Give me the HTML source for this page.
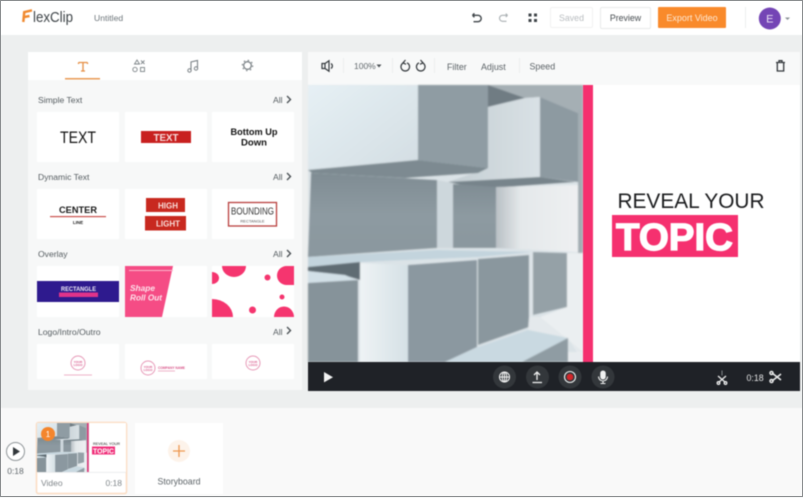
<!DOCTYPE html>
<html><head><meta charset="utf-8"><style>
html,body{margin:0;padding:0;width:803px;height:498px;overflow:hidden;background:#edefef}
svg{position:absolute;left:0;top:0;display:block;filter:blur(.45px)}
text{font-family:"Liberation Sans",sans-serif}
#edge{position:absolute;left:0;top:0;width:801px;height:495px;border:1px solid #8a8d8f}
</style></head><body>
<svg width="803" height="498" viewBox="0 0 803 498" xmlns="http://www.w3.org/2000/svg">
<defs>
<filter id="soft" x="-2%" y="-2%" width="104%" height="104%"><feGaussianBlur stdDeviation=".7"/></filter>
<linearGradient id="lg1" x1="0" y1="0" x2="1" y2="1"><stop offset="0" stop-color="#e6f0f5"/><stop offset="1" stop-color="#d3dde2"/></linearGradient>
<linearGradient id="lg2" x1="0" y1="0" x2="1" y2="0"><stop offset="0" stop-color="#c4ced3"/><stop offset="1" stop-color="#d9e1e5"/></linearGradient>
<linearGradient id="lg3" x1="0" y1="0" x2="1" y2="0"><stop offset="0" stop-color="#b9c0c5"/><stop offset=".3" stop-color="#e4e8ea"/><stop offset="1" stop-color="#eef0f2"/></linearGradient>
<linearGradient id="lg4" x1="0" y1="0" x2="1" y2="0"><stop offset="0" stop-color="#eef3f5"/><stop offset="1" stop-color="#d5e0e5"/></linearGradient>
<linearGradient id="lg5" x1="0" y1="0" x2="0" y2="1"><stop offset="0" stop-color="#7f8c93"/><stop offset=".5" stop-color="#8d9aa1"/><stop offset="1" stop-color="#8a979e"/></linearGradient>
<g id="blocks">
<rect x="308" y="85" width="275" height="277" fill="#dbe3e7"/>
<polygon points="488,85 583,85 583,120 578,113 540,97 525,98" fill="#a5afb4"/>
<rect x="578" y="110" width="5" height="143" fill="#a3adb3"/>
<polygon points="308,85 418,85 418,160 308,170" fill="url(#lg1)"/>
<polygon points="418,85 488,85 488,168 418,160" fill="#8f9ca3"/>
<polygon points="488,85 525,98 488,107" fill="#6f7c83"/>
<polygon points="488,107 525,98 540,97 540,177 448,182 488,168" fill="url(#lg2)"/>
<polygon points="540,97 578,113 578,182 540,177" fill="#8d9aa1"/>
<polygon points="308,170 418,160 488,168 478,173 405,178 312,173" fill="#7d8a91"/>
<polygon points="448,182 540,177 575,182 505,187 472,187" fill="#77848b"/>
<polygon points="311,173 437,180 437,248 308,257" fill="url(#lg5)"/>
<polygon points="437,180 453,183 453,248 437,248" fill="#cdd7dc"/>
<polygon points="453,184 496,187 496,248 453,248" fill="url(#lg5)"/>
<polygon points="496,187 578,185 578,252 496,248" fill="url(#lg3)"/>
<polygon points="308,257 437,250 532,252 478,257 360,262 308,267" fill="#c3d4dd"/>
<polygon points="308,267 360,262 360,280 350,277 308,271" fill="#5f6c73"/>
<polygon points="308,271 345,275 357,280 308,283" fill="#d2e0e7"/>
<polygon points="308,283 358,280 358,362 308,362" fill="#86939a"/>
<polygon points="360,263 408,265 408,362 360,362" fill="url(#lg4)"/>
<polygon points="408,265 477,260 477,347 445,362 408,362" fill="#8b98a0"/>
<polygon points="478,259 529,255 529,327 478,345" fill="#8a979e"/>
<polygon points="529,252 533,252 533,320 529,325" fill="#dde4e8"/>
<polygon points="533,252 567,253 567,307 533,315" fill="#95a1a7"/>
<polygon points="567,253 583,253 583,352 540,317 567,307" fill="#ebeff1"/>
<polygon points="529,317 540,317 583,352 583,362 568,338 528,330" fill="#e4e9ec"/>
<polygon points="478,347 528,330 568,338 522,362 445,362" fill="#c9d9e1"/>
<polygon points="522,362 568,338 568,362" fill="#8f9ca3"/>
<polygon points="568,352 583,352 583,362 568,362" fill="#e8ecef"/>
</g>
</defs>

<!-- header -->
<rect width="803" height="498" fill="#edefef"/>
<rect x="0" y="0" width="803" height="35" fill="#fff"/>
<path d="M23.500 12.300 L32 10.300 M23.500 17.200 L29.500 16 M24.300 11.500 L23.300 22" stroke="#f08a30" stroke-width="2.500" fill="none"/>
<text x="33" y="22" font-size="15" fill="#3d4347" textLength="40" lengthAdjust="spacingAndGlyphs">lexClip</text>
<text x="94" y="21" font-size="8.600" fill="#6e767b">Untitled</text>

<path d="M472.500 15.300h5.500a3.200 3.200 0 0 1 0 6.400h-4.500M472.500 15.300l1.900-1.900M472.500 15.300l1.900 1.900" stroke="#3f4549" stroke-width="1.400" fill="none"/>
<path d="M507.500 15.300h-5a3 3 0 0 0 0 6h4M507.500 15.300l-1.700-1.700M507.500 15.300l-1.700 1.700" stroke="#a9afb2" stroke-width="1.100" fill="none"/>
<path d="M528.500 13.500h3v3h-3zM534 13.500h3v3h-3zM528.500 19h3v3h-3zM534 19h3v3h-3z" fill="#3f4549"/>
<rect x="550.500" y="7.500" width="42" height="20" rx="1.500" fill="#fff" stroke="#f1f2f2"/>
<text x="571.500" y="21" font-size="8.800" fill="#b9bdc0" text-anchor="middle">Saved</text>
<rect x="600.500" y="7.500" width="50" height="21" rx="1.500" fill="#fff" stroke="#e8eaea"/>
<text x="625.500" y="21" font-size="8.800" fill="#474d51" text-anchor="middle">Preview</text>
<rect x="658" y="7" width="68" height="21" rx="1" fill="#f98a2b"/>
<text x="692" y="21" font-size="9" fill="#fde9d5" text-anchor="middle">Export Video</text>
<rect x="745" y="7" width="1" height="21" fill="#eceeee"/>
<circle cx="769.800" cy="18.500" r="11" fill="#7445b5"/>
<text x="769.800" y="22.500" font-size="11" fill="#e9e0f4" text-anchor="middle">E</text>
<path d="M785 17.500h5l-2.500 2.500z" fill="#8a9094"/>

<!-- left panel -->
<rect x="28" y="52" width="274" height="338" fill="#f7f8f8"/>
<rect x="28" y="52" width="274" height="28" fill="#fff"/>
<rect x="65" y="78" width="35" height="1.500" fill="#ea9a55"/>
<path d="M78.500 62.500h9M83 62.500v8.500M81 71h4M78.500 62.500v1.500M87.500 62.500v1.500" stroke="#e58e44" stroke-width="1.300" fill="none"/>
<path d="M137 60l-2.500 4h5zM141 60.500l3.500 3.500M144.500 60.500l-3.500 3.500" stroke="#7d8488" stroke-width=".9" fill="none"/>
<circle cx="135" cy="69.500" r="2.200" stroke="#7d8488" stroke-width=".9" fill="none"/><rect x="140.500" y="67.500" width="4" height="4" stroke="#7d8488" stroke-width=".9" fill="none"/>
<path d="M191 70.500v-8.500l6.500-1.500v8" stroke="#7d8488" stroke-width="1.100" fill="none"/><circle cx="189.500" cy="70.500" r="1.700" stroke="#7d8488" fill="none"/><circle cx="196" cy="68.500" r="1.700" stroke="#7d8488" fill="none"/>
<circle cx="247.500" cy="65.500" r="3.800" stroke="#7d8488" stroke-width="1.300" fill="none"/>
<circle cx="247.500" cy="65.500" r="5.200" stroke="#7d8488" stroke-width="1.100" stroke-dasharray="1.500 2.580" fill="none"/>

<g font-size="8.600" fill="#565d61">
<text x="38" y="103">Simple Text</text><text x="273" y="103">All</text>
<text x="38" y="180">Dynamic Text</text><text x="273" y="180">All</text>
<text x="38" y="257">Overlay</text><text x="273" y="257">All</text>
<text x="38" y="335">Logo/Intro/Outro</text><text x="273" y="335">All</text>
</g>
<g stroke="#4c5256" stroke-width="1.400" fill="none">
<path d="M287 96l3.500 3.500-3.500 3.500"/><path d="M287 173l3.500 3.500-3.500 3.500"/><path d="M287 250l3.500 3.500-3.500 3.500"/><path d="M287 327l3.500 3.500-3.500 3.500"/>
</g>

<g fill="#fff">
<rect x="37" y="112" width="82" height="50"/><rect x="125" y="112" width="82" height="50"/><rect x="212" y="112" width="82" height="50"/>
<rect x="37" y="189" width="82" height="50"/><rect x="125" y="189" width="82" height="50"/><rect x="212" y="189" width="82" height="50"/>
<rect x="37" y="266" width="82" height="51"/><rect x="125" y="266" width="82" height="51"/><rect x="212" y="266" width="82" height="51"/>
<rect x="37" y="344" width="82" height="35"/><rect x="125" y="344" width="82" height="35"/><rect x="212" y="344" width="82" height="35"/>
</g>

<text x="78" y="143" font-size="16.500" fill="#111" text-anchor="middle" textLength="36" lengthAdjust="spacingAndGlyphs">TEXT</text>
<rect x="141" y="131" width="50" height="12" fill="#c8201f"/>
<text x="166" y="141" font-size="10" font-weight="bold" fill="#f6dcdc" text-anchor="middle" textLength="25" lengthAdjust="spacingAndGlyphs">TEXT</text>
<text x="254" y="135" font-size="9.300" font-weight="bold" fill="#111" text-anchor="middle" textLength="47" lengthAdjust="spacingAndGlyphs">Bottom Up</text>
<text x="254" y="145.500" font-size="9.300" font-weight="bold" fill="#111" text-anchor="middle" textLength="26" lengthAdjust="spacingAndGlyphs">Down</text>

<text x="78" y="213" font-size="9.500" font-weight="bold" fill="#1a1a1a" text-anchor="middle" textLength="38" lengthAdjust="spacingAndGlyphs">CENTER</text>
<rect x="50" y="216" width="56" height="1.200" fill="#c9504c"/>
<text x="78" y="224" font-size="4.500" font-weight="bold" fill="#222" text-anchor="middle">LINE</text>
<rect x="146" y="198" width="39" height="14" fill="#c8291f"/>
<rect x="145" y="216" width="41" height="14.500" fill="#c8291f"/>
<text x="168" y="208.500" font-size="8" font-weight="bold" fill="#f8dcd8" text-anchor="middle" textLength="20" lengthAdjust="spacingAndGlyphs">HIGH</text>
<text x="168" y="226.500" font-size="8" font-weight="bold" fill="#f8dcd8" text-anchor="middle" textLength="24" lengthAdjust="spacingAndGlyphs">LIGHT</text>
<rect x="228.500" y="202.500" width="48" height="23.500" fill="#fff" stroke="#b8403e" stroke-width="1.300"/>
<text x="252.500" y="214.500" font-size="10" fill="#333" text-anchor="middle" textLength="43" lengthAdjust="spacingAndGlyphs">BOUNDING</text>
<text x="252.500" y="222.500" font-size="4" fill="#555" text-anchor="middle">RECTANGLE</text>

<rect x="37" y="281" width="82" height="21" fill="#2e1a8e"/>
<text x="78.500" y="291" font-size="6.500" font-weight="bold" fill="#efeaf6" text-anchor="middle" textLength="35" lengthAdjust="spacingAndGlyphs">RECTANGLE</text>
<rect x="59" y="292.500" width="39" height="4.500" fill="#e0338a"/>
<polygon points="125,266 173,266 162,317 125,317" fill="#f54c85"/>
<rect x="129" y="270" width="44" height="1" fill="#fbb6cc"/>
<text x="130" y="291" font-size="8.500" font-weight="bold" font-style="italic" fill="#fde1ea" textLength="25" lengthAdjust="spacingAndGlyphs">Shape</text>
<text x="130" y="300.500" font-size="8.500" font-weight="bold" font-style="italic" fill="#fde1ea" textLength="32" lengthAdjust="spacingAndGlyphs">Roll Out</text>
<g fill="#f5356f">
<path d="M222 266a12 11 0 0 0 24 0z"/>
<path d="M212 272a7 6 0 0 1 0 12z"/>
<circle cx="267.500" cy="277.500" r="3"/>
<path d="M294 266h-7a9.500 9.500 0 0 0 -10 9.500a9.500 9.500 0 0 0 10 9.500h7z"/>
<circle cx="282" cy="297" r="2.500"/>
<circle cx="252.500" cy="310" r="3.500"/>
<path d="M212 299a21 18 0 0 1 21 18h-21z"/>
<path d="M274 317a10 10.500 0 0 1 20 0z"/>
</g>

<g fill="none" stroke="#e79ab8" stroke-width="1">
<circle cx="78" cy="363" r="7"/><circle cx="148" cy="368" r="7"/><circle cx="253" cy="363" r="7"/>
</g>
<g fill="#d9588b" font-size="3" font-weight="bold" text-anchor="middle">
<text x="78" y="363">YOUR</text><text x="78" y="366">LOGO</text>
<text x="148" y="368">YOUR</text><text x="148" y="371">LOGO</text>
<text x="253" y="363">YOUR</text><text x="253" y="366">LOGO</text>
</g>
<rect x="64" y="374.500" width="28" height="1" fill="#eeb3c9"/>
<text x="158" y="369" font-size="3.800" font-weight="bold" fill="#d9588b" textLength="27" lengthAdjust="spacingAndGlyphs">COMPANY NAME</text>
<rect x="158" y="370.500" width="17" height="1" fill="#eeb3c9"/>

<!-- right toolbar -->
<rect x="308" y="52" width="492" height="33" fill="#f8f9f9"/>
<path d="M322 63.500h3l4-2.700v10.400l-4-2.700h-3zM325 63.500v5M331 63.500a3 3 0 0 1 0 5" stroke="#33383c" stroke-width="1.200" fill="none"/>
<rect x="343" y="58" width="1" height="15" fill="#eceeee"/><rect x="392" y="58" width="1" height="15" fill="#eceeee"/><rect x="434" y="58" width="1" height="15" fill="#eceeee"/><rect x="519" y="58" width="1" height="15" fill="#eceeee"/>
<text x="354" y="69" font-size="8.500" fill="#62696d">100%</text>
<path d="M376.500 64.500h5l-2.500 3z" fill="#4c5256"/>
<path d="M403.500 62.800a4.300 4.300 0 1 0 3.500 0M405.500 60l-2.500 2.800 3 1.500" stroke="#33383c" stroke-width="1.200" fill="none"/>
<path d="M422.500 62.800a4.300 4.300 0 1 1 -3.500 0M420.500 60l2.500 2.800-3 1.500" stroke="#33383c" stroke-width="1.200" fill="none"/>
<text x="447" y="70" font-size="8.900" fill="#5c6367">Filter</text>
<text x="481" y="70" font-size="8.900" fill="#5c6367">Adjust</text>
<text x="529.500" y="69.500" font-size="8.900" fill="#5c6367">Speed</text>
<path d="M776 62.500h9M779 62.500v-1.800h3v1.800M777.300 62.500v8.500h6.400v-8.500" stroke="#33383c" stroke-width="1.300" fill="none"/>

<!-- video -->
<g filter="url(#soft)"><use href="#blocks"/></g>
<rect x="583" y="85" width="10" height="277" fill="#f5306f"/>
<rect x="593" y="85" width="207" height="277" fill="#fff"/>
<text x="617.500" y="208" font-size="21" fill="#1b1c1e" textLength="147" lengthAdjust="spacingAndGlyphs">REVEAL YOUR</text>
<rect x="612" y="215" width="126" height="42" fill="#f5306f"/>
<text x="616" y="250" font-size="38" font-weight="bold" fill="#fff" stroke="#fff" stroke-width="1.300" textLength="117" lengthAdjust="spacingAndGlyphs">TOPIC</text>

<!-- play bar -->
<rect x="308" y="362" width="492" height="29" fill="#1f2227"/>
<path d="M324 372l9 5.200-9 5.200z" fill="#f2f3f3"/>
<g fill="#33373b"><circle cx="504.500" cy="377" r="11.500"/><circle cx="537.500" cy="377" r="11.500"/><circle cx="570" cy="377" r="11.500"/><circle cx="603" cy="377" r="11.500"/></g>
<g stroke="#f0f1f1" fill="none" stroke-width="1.100">
<circle cx="504.500" cy="377" r="5"/><path d="M499.500 377h10M504.500 372v10"/><ellipse cx="504.500" cy="377" rx="2.300" ry="5"/>
<path d="M537 380v-7.500M534 375l3-3 3 3" stroke-width="1.300"/><path d="M532.500 382.500h9.500" stroke-width="1.300"/>
<circle cx="570" cy="377" r="5.500"/>
<rect x="600.800" y="371" width="4.400" height="8" rx="2.200" fill="#f0f1f1"/><path d="M598.500 376.500a4.500 4.500 0 0 0 9 0M603 381v2.500M600.500 383.500h5"/>
</g>
<circle cx="570" cy="377" r="3.300" fill="#d3262a"/>
<path d="M722 370.500v5" stroke="#81868a" stroke-width="1"/>
<g stroke="#eceded" stroke-width="1.300" fill="none"><path d="M718 376l7.500 6.500M726 376l-7.500 6.500"/><circle cx="718.500" cy="383" r="1.300"/><circle cx="725.500" cy="383" r="1.300"/></g>
<text x="746.500" y="381" font-size="8.800" fill="#e4e5e6">0:18</text>
<g stroke="#eceded" stroke-width="1.500" fill="none"><path d="M772 373l9 7M772 381l9-7"/><circle cx="771.500" cy="373" r="1.500"/><circle cx="771.500" cy="381" r="1.500"/></g>

<!-- timeline -->
<rect x="0" y="408" width="803" height="90" fill="#f9f9f9"/>
<circle cx="15.500" cy="451.500" r="9" fill="#fff" stroke="#8f9598"/>
<path d="M13 447l7 4.500-7 4.500z" fill="#33383c"/>
<text x="15.500" y="474" font-size="8.500" fill="#62696d" text-anchor="middle">0:18</text>

<rect x="36.500" y="422.500" width="90" height="71" rx="2" fill="#fff" stroke="#fbdcc2" stroke-width="1.500"/>
<g transform="translate(37 423) scale(.182 .177) translate(-308 -85)" filter="url(#soft)"><use href="#blocks"/></g>
<rect x="87" y="423" width="1.800" height="49" fill="#d63a78"/>
<rect x="89" y="423" width="37" height="49" fill="#fff"/>
<rect x="37" y="472" width="89" height=".7" fill="#e5e7e8"/>
<text x="93" y="445" font-size="3.800" fill="#222" textLength="27" lengthAdjust="spacingAndGlyphs">REVEAL YOUR</text>
<rect x="92" y="446.500" width="23" height="8" fill="#f0307a"/>
<text x="93" y="453.500" font-size="7.500" font-weight="bold" fill="#fff" textLength="21" lengthAdjust="spacingAndGlyphs">TOPIC</text>
<circle cx="48" cy="434" r="7" fill="#f4852c"/>
<text x="48" y="437" font-size="8" fill="#fff" text-anchor="middle">1</text>
<text x="41" y="486" font-size="8.500" fill="#81878b">Video</text>
<text x="122" y="486" font-size="8.500" fill="#81878b" text-anchor="end">0:18</text>

<rect x="135" y="423" width="88" height="71" fill="#fff"/>
<circle cx="179" cy="451" r="11" fill="#fdf3ea"/>
<path d="M179 445v12M173 451h12" stroke="#ee9850" stroke-width="1.300"/>
<text x="179" y="484.500" font-size="8.800" fill="#5d6468" text-anchor="middle">Storyboard</text>
</svg>
<div id="edge"></div>
</body></html>
